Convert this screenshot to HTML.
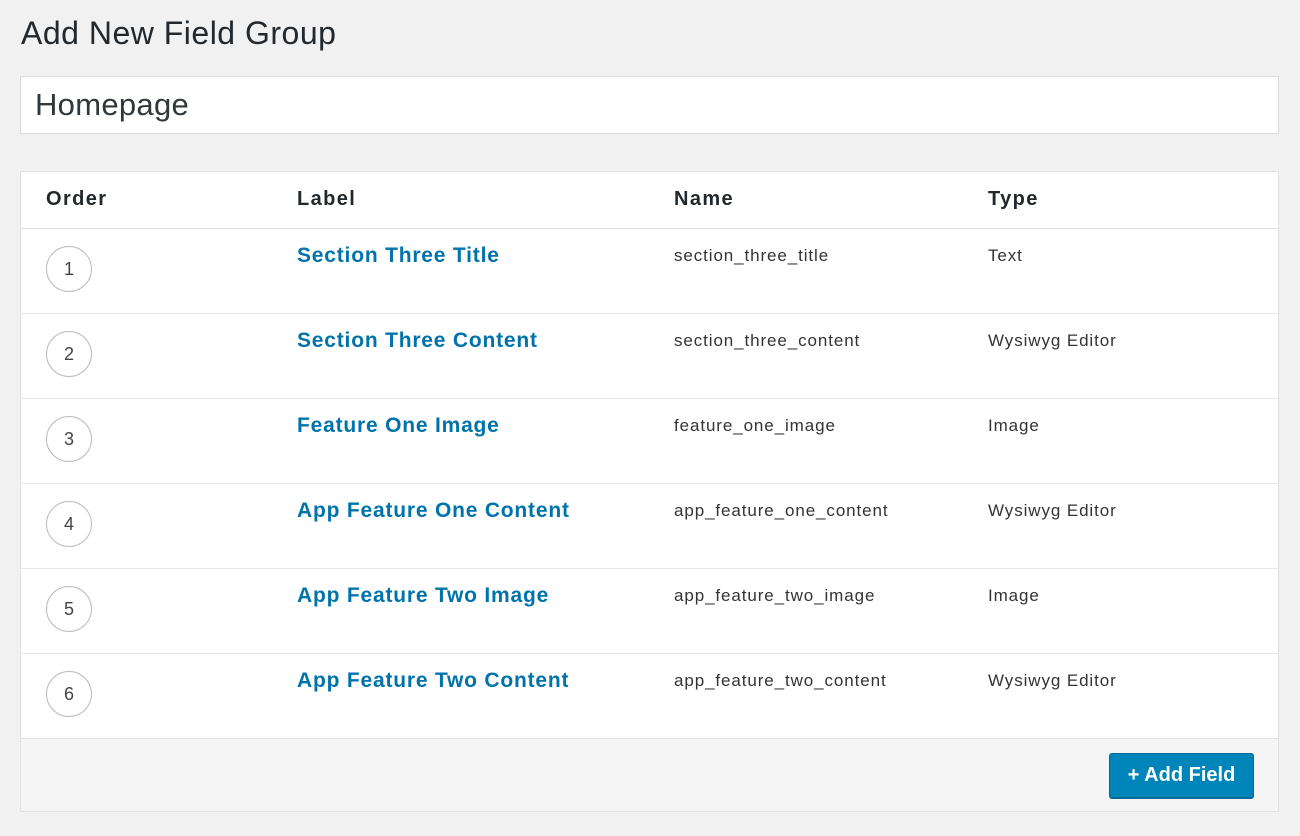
<!DOCTYPE html>
<html><head><style>
body{margin:0;background:#f1f1f1;font-family:"Liberation Sans",sans-serif;width:1300px;height:836px;overflow:hidden;position:relative;color:#23282d}
h1{position:absolute;left:21px;top:12px;margin:0;font-weight:400;font-size:32px;line-height:42px;color:#23282d;letter-spacing:0.5px}
.inp{position:absolute;left:20px;top:76px;background:#fff;border:1px solid #ddd;font-size:31px;line-height:56px;padding-left:14px;box-sizing:border-box;width:1259px;height:58px;color:#32373c;letter-spacing:0.3px}
.box{position:absolute;left:20px;top:171px;width:1259px;height:641px;border:1px solid #e1e1e1;box-sizing:border-box;background:#fff}
.hd{position:absolute;left:0;top:0;width:100%;height:57px;border-bottom:1px solid #e1e1e1;box-sizing:border-box;font-weight:700;font-size:20px;letter-spacing:1.4px}
.hd span,.row span{position:absolute}
.row{position:absolute;left:0;width:100%;height:85px;border-bottom:1px solid #e8e8e8;box-sizing:border-box}
.c{left:25px;top:17px;width:44px;height:44px;border:1px solid #bbb;border-radius:50%;text-align:center;line-height:44px;font-size:18px;color:#444}
.l{left:276px;top:15px;font-weight:700;font-size:21px;color:#0073aa;letter-spacing:0.8px}
.n{left:653px;top:17px;font-size:17px;color:#333;letter-spacing:0.9px}
.t{left:967px;top:17px;font-size:17px;color:#333;letter-spacing:0.9px}
.ft{position:absolute;left:0;top:567px;width:100%;height:72px;background:#f5f5f5}
.btn{position:absolute;left:1088px;top:14px;width:145px;height:46px;background:#0085ba;border:1px solid #006799;border-bottom-width:2px;box-sizing:border-box;border-radius:3px;color:#fff;font-size:20px;font-weight:700;text-align:center;line-height:42px}
</style></head><body>
<h1>Add New Field Group</h1>
<div class="inp">Homepage</div>
<div class="box">
<div class="hd"><span style="left:25px;top:16px">Order</span><span style="left:276px;top:16px">Label</span><span style="left:653px;top:16px">Name</span><span style="left:967px;top:16px">Type</span></div>
<div class="row" style="top:57px"><span class="c">1</span><span class="l">Section Three Title</span><span class="n">section_three_title</span><span class="t">Text</span></div>
<div class="row" style="top:142px"><span class="c">2</span><span class="l">Section Three Content</span><span class="n">section_three_content</span><span class="t">Wysiwyg Editor</span></div>
<div class="row" style="top:227px"><span class="c">3</span><span class="l">Feature One Image</span><span class="n">feature_one_image</span><span class="t">Image</span></div>
<div class="row" style="top:312px"><span class="c">4</span><span class="l">App Feature One Content</span><span class="n">app_feature_one_content</span><span class="t">Wysiwyg Editor</span></div>
<div class="row" style="top:397px"><span class="c">5</span><span class="l">App Feature Two Image</span><span class="n">app_feature_two_image</span><span class="t">Image</span></div>
<div class="row" style="top:482px;border-bottom:1px solid #e1e1e1"><span class="c">6</span><span class="l">App Feature Two Content</span><span class="n">app_feature_two_content</span><span class="t">Wysiwyg Editor</span></div>
<div class="ft"><div class="btn">+ Add Field</div></div>
</div>
</body></html>
